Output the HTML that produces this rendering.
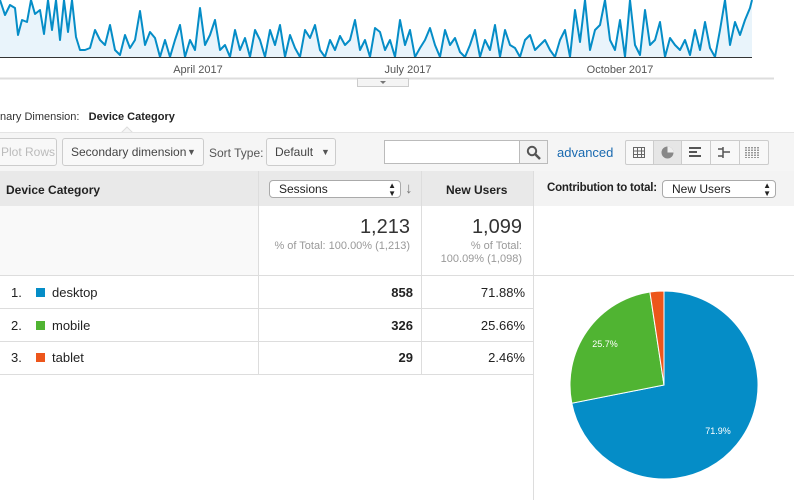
<!DOCTYPE html>
<html><head><style>
*{margin:0;padding:0;box-sizing:border-box}
body{width:794px;height:500px;overflow:hidden;background:#fff;font-family:"Liberation Sans",Arial,sans-serif;color:#222;position:relative}
.a{position:absolute}
.btn{position:absolute;border:1px solid #ccc;border-radius:3px;background:#f8f8f8;font-size:12px;color:#444;line-height:26px;padding-left:8px}
.sel{position:absolute;border:1px solid #aaa;border-radius:4px;background:#fff;font-size:12px;color:#222;line-height:16px;padding-left:9px;height:18px}
.hl{position:absolute;height:1px;background:#ddd}
.vl{position:absolute;width:1px;background:#ddd}
.num{position:absolute;font-size:13px;text-align:right}
</style></head><body>
<svg class="a" style="left:0;top:0" width="794" height="90">
<polyline fill="#e9f4fb" stroke="none" points="0,57 0,0 5,15 10,5 15,8 18,35 22,20 27,22 31,0 35,14 40,10 44,34 48,0 52,30 56,0 60,40 64,0 68,32 72,0 76,37 80,50 85,50 90,48 95,30 100,40 105,45 110,25 115,50 120,55 125,35 130,48 135,40 140,11 145,45 150,32 155,38 160,57 165,40 170,57 175,40 180,25 185,57 190,40 195,50 200,8 205,45 210,35 215,20 220,50 225,45 230,57 235,30 240,50 245,38 250,57 255,30 260,40 265,57 270,30 275,45 280,25 285,57 290,35 295,48 300,57 305,30 310,38 315,25 320,50 325,57 330,40 335,50 340,36 345,45 350,40 355,20 360,50 365,40 370,57 375,28 380,32 385,50 390,40 395,57 400,20 405,45 410,30 415,57 420,48 425,40 430,28 435,45 440,57 445,30 450,45 455,38 460,52 465,57 470,45 475,30 480,57 485,40 490,50 495,25 500,57 505,30 510,45 515,48 520,57 525,40 530,35 535,50 540,45 545,40 550,50 555,57 560,40 565,30 570,57 575,10 580,42 585,0 590,50 595,30 600,25 605,0 610,40 615,50 620,20 625,57 630,0 635,45 640,55 645,10 650,45 655,40 660,22 665,57 670,38 675,45 680,50 685,40 690,55 695,30 700,50 705,22 710,48 715,57 720,30 725,0 730,45 735,22 740,35 745,20 750,8 752,0 752,57"/>
<polyline fill="none" stroke="#058dc7" stroke-width="2" stroke-linejoin="round" points="0,0 5,15 10,5 15,8 18,35 22,20 27,22 31,0 35,14 40,10 44,34 48,0 52,30 56,0 60,40 64,0 68,32 72,0 76,37 80,50 85,50 90,48 95,30 100,40 105,45 110,25 115,50 120,55 125,35 130,48 135,40 140,11 145,45 150,32 155,38 160,57 165,40 170,57 175,40 180,25 185,57 190,40 195,50 200,8 205,45 210,35 215,20 220,50 225,45 230,57 235,30 240,50 245,38 250,57 255,30 260,40 265,57 270,30 275,45 280,25 285,57 290,35 295,48 300,57 305,30 310,38 315,25 320,50 325,57 330,40 335,50 340,36 345,45 350,40 355,20 360,50 365,40 370,57 375,28 380,32 385,50 390,40 395,57 400,20 405,45 410,30 415,57 420,48 425,40 430,28 435,45 440,57 445,30 450,45 455,38 460,52 465,57 470,45 475,30 480,57 485,40 490,50 495,25 500,57 505,30 510,45 515,48 520,57 525,40 530,35 535,50 540,45 545,40 550,50 555,57 560,40 565,30 570,57 575,10 580,42 585,0 590,50 595,30 600,25 605,0 610,40 615,50 620,20 625,57 630,0 635,45 640,55 645,10 650,45 655,40 660,22 665,57 670,38 675,45 680,50 685,40 690,55 695,30 700,50 705,22 710,48 715,57 720,30 725,0 730,45 735,22 740,35 745,20 750,8 752,0"/>
<line x1="0" y1="57.5" x2="752" y2="57.5" stroke="#333" stroke-width="1"/>
<line x1="0" y1="78.5" x2="774" y2="78.5" stroke="#ddd" stroke-width="2"/>
<rect x="357.5" y="78.5" width="51" height="8" fill="#f4f4f4" stroke="#ccc"/>
<path d="M380 81 L386 81 L383 84 Z" fill="#777"/>
<text x="198" y="73" font-size="11" fill="#555" text-anchor="middle" font-family="Liberation Sans">April 2017</text>
<text x="408" y="73" font-size="11" fill="#555" text-anchor="middle" font-family="Liberation Sans">July 2017</text>
<text x="620" y="73" font-size="11" fill="#555" text-anchor="middle" font-family="Liberation Sans">October 2017</text>
</svg>
<div class="a" style="left:0;top:111px;font-size:11px;color:#333">nary Dimension:&nbsp;&nbsp; <b style="color:#222">Device Category</b></div>
<svg class="a" style="left:120px;top:126px" width="16" height="8"><path d="M1 7 L7 1 L13 7" fill="#f5f5f5" stroke="#ddd"/></svg>
<div class="a" style="left:0;top:132px;width:794px;height:39px;background:#f5f5f5;border-top:1px solid #e4e4e4"></div>
<div class="btn" style="left:-10px;top:138px;width:67px;height:28px;color:#bbb;padding-left:10px">Plot Rows</div>
<div class="btn" style="left:62px;top:138px;width:142px;height:28px">Secondary dimension <span style="position:absolute;left:124px;font-size:9px;color:#555">▼</span></div>
<div class="a" style="left:209px;top:146px;font-size:12px;color:#555">Sort Type:</div>
<div class="btn" style="left:266px;top:138px;width:70px;height:28px">Default <span style="position:absolute;left:54px;font-size:9px;color:#555">▼</span></div>
<div class="a" style="left:384px;top:140px;width:136px;height:24px;border:1px solid #bbb;background:#fff"></div>
<div class="a" style="left:519px;top:140px;width:29px;height:24px;border:1px solid #bbb;background:#f2f2f2"></div>
<svg class="a" style="left:526px;top:145px" width="16" height="16"><circle cx="6" cy="6" r="4.2" fill="none" stroke="#555" stroke-width="2"/><line x1="9" y1="9" x2="14" y2="14" stroke="#555" stroke-width="2.5"/></svg>
<div class="a" style="left:557px;top:145px;font-size:13px;color:#1a6ab0">advanced</div>
<div class="a" style="left:625px;top:140px;width:144px;height:25px;border:1px solid #ccc;background:#f8f8f8;border-radius:2px"></div>
<div class="a" style="left:653px;top:141px;width:29px;height:23px;background:#e6e6e6;border-left:1px solid #ccc;border-right:1px solid #ccc"></div>
<div class="vl" style="left:710px;top:141px;height:23px;background:#ccc"></div>
<div class="vl" style="left:739px;top:141px;height:23px;background:#ccc"></div>
<svg class="a" style="left:625px;top:140px" width="144" height="25">
<g stroke="#666" fill="none" stroke-width="1"><rect x="8.5" y="7.5" width="11" height="10"/><line x1="12.5" y1="7" x2="12.5" y2="18"/><line x1="16.5" y1="7" x2="16.5" y2="18"/><line x1="8" y1="11" x2="20" y2="11"/><line x1="8" y1="14.5" x2="20" y2="14.5"/></g>
<circle cx="42.5" cy="12.5" r="6" fill="#888"/><path d="M42.5 12.5 L42.5 6.5 A6 6 0 0 1 48.5 12.5 Z" fill="#eee"/>
<g fill="#555"><rect x="64" y="7" width="12" height="2"/><rect x="64" y="11" width="8" height="2"/><rect x="64" y="15" width="12" height="2"/></g>
<g stroke="#555" stroke-width="1.5"><line x1="98" y1="7" x2="98" y2="18"/><line x1="93" y1="9" x2="98" y2="9"/><line x1="98" y1="12" x2="105" y2="12"/><line x1="93" y1="16" x2="98" y2="16"/></g>
<g stroke="#666" stroke-width="1.3" stroke-dasharray="1.5 1"><line x1="121" y1="7" x2="121" y2="18"/><line x1="124" y1="7" x2="124" y2="18"/><line x1="127" y1="7" x2="127" y2="18"/><line x1="130" y1="7" x2="130" y2="18"/><line x1="133" y1="7" x2="133" y2="18"/></g>
</svg>
<div class="a" style="left:0;top:171px;width:533px;height:35px;background:#e9e9e9"></div>
<div class="a" style="left:533px;top:171px;width:261px;height:35px;background:#f3f3f3"></div>
<div class="a" style="left:6px;top:183px;font-size:12px;font-weight:bold">Device Category</div>
<div class="sel" style="left:269px;top:180px;width:132px">Sessions<span style="position:absolute;right:4px;font-size:8px;line-height:8px;top:1px">▲<br>▼</span></div>
<div class="a" style="left:405px;top:180px;font-size:15px;color:#777">↓</div>
<div class="a" style="left:446px;top:183px;font-size:12px;font-weight:bold">New Users</div>
<div class="a" style="left:547px;top:182px;font-size:11.5px;font-weight:bold;letter-spacing:-0.2px">Contribution to total:</div>
<div class="sel" style="left:662px;top:180px;width:114px">New Users<span style="position:absolute;right:4px;font-size:8px;line-height:8px;top:1px">▲<br>▼</span></div>
<div class="a" style="left:0;top:206px;width:258px;height:69px;background:#f9f9f9"></div>
<div class="num" style="left:260px;top:216px;width:150px;font-size:20px;color:#333">1,213</div>
<div class="num" style="left:260px;top:240px;width:150px;font-size:11px;color:#999">% of Total: 100.00% (1,213)</div>
<div class="num" style="left:422px;top:216px;width:100px;font-size:20px;color:#333">1,099</div>
<div class="num" style="left:422px;top:240px;width:100px;font-size:11px;color:#999;line-height:13px">% of Total:<br>100.09% (1,098)</div>
<div class="vl" style="left:258px;top:171px;height:203px"></div>
<div class="vl" style="left:421px;top:171px;height:203px"></div>
<div class="vl" style="left:533px;top:171px;height:329px"></div>
<div class="hl" style="left:0;top:275px;width:794px"></div>
<div class="hl" style="left:0;top:308px;width:533px"></div>
<div class="hl" style="left:0;top:341px;width:533px"></div>
<div class="hl" style="left:0;top:374px;width:533px"></div>
<div class="a" style="left:11px;top:285px;font-size:13px">1.</div>
<div class="a" style="left:36px;top:288px;width:9px;height:9px;background:#058dc7"></div>
<div class="a" style="left:52px;top:285px;font-size:13px">desktop</div>
<div class="a" style="left:11px;top:318px;font-size:13px">2.</div>
<div class="a" style="left:36px;top:321px;width:9px;height:9px;background:#50b432"></div>
<div class="a" style="left:52px;top:318px;font-size:13px">mobile</div>
<div class="a" style="left:11px;top:350px;font-size:13px">3.</div>
<div class="a" style="left:36px;top:353px;width:9px;height:9px;background:#ed561b"></div>
<div class="a" style="left:52px;top:350px;font-size:13px">tablet</div>
<div class="num" style="left:300px;top:285px;width:113px;font-weight:bold">858</div>
<div class="num" style="left:300px;top:318px;width:113px;font-weight:bold">326</div>
<div class="num" style="left:300px;top:350px;width:113px;font-weight:bold">29</div>
<div class="num" style="left:422px;top:285px;width:103px">71.88%</div>
<div class="num" style="left:422px;top:318px;width:103px">25.66%</div>
<div class="num" style="left:422px;top:350px;width:103px">2.46%</div>
<svg class="a" style="left:533px;top:276px" width="261" height="224">
<g transform="translate(-533,-276)" stroke="#fff" stroke-width="1">
<path d="M664 385 L664 291 A94 94 0 1 1 571.8 403.2 Z" fill="#058dc7"/>
<path d="M664 385 L571.8 403.2 A94 94 0 0 1 649.9 292 Z" fill="#50b432"/>
<path d="M664 385 L649.9 292 A94 94 0 0 1 664 291 Z" fill="#ed561b"/>
</g>
<text x="185" y="158" font-size="9" fill="#fff" text-anchor="middle" font-family="Liberation Sans">71.9%</text>
<text x="72" y="71" font-size="9" fill="#fff" text-anchor="middle" font-family="Liberation Sans">25.7%</text>
</svg>
</body></html>
